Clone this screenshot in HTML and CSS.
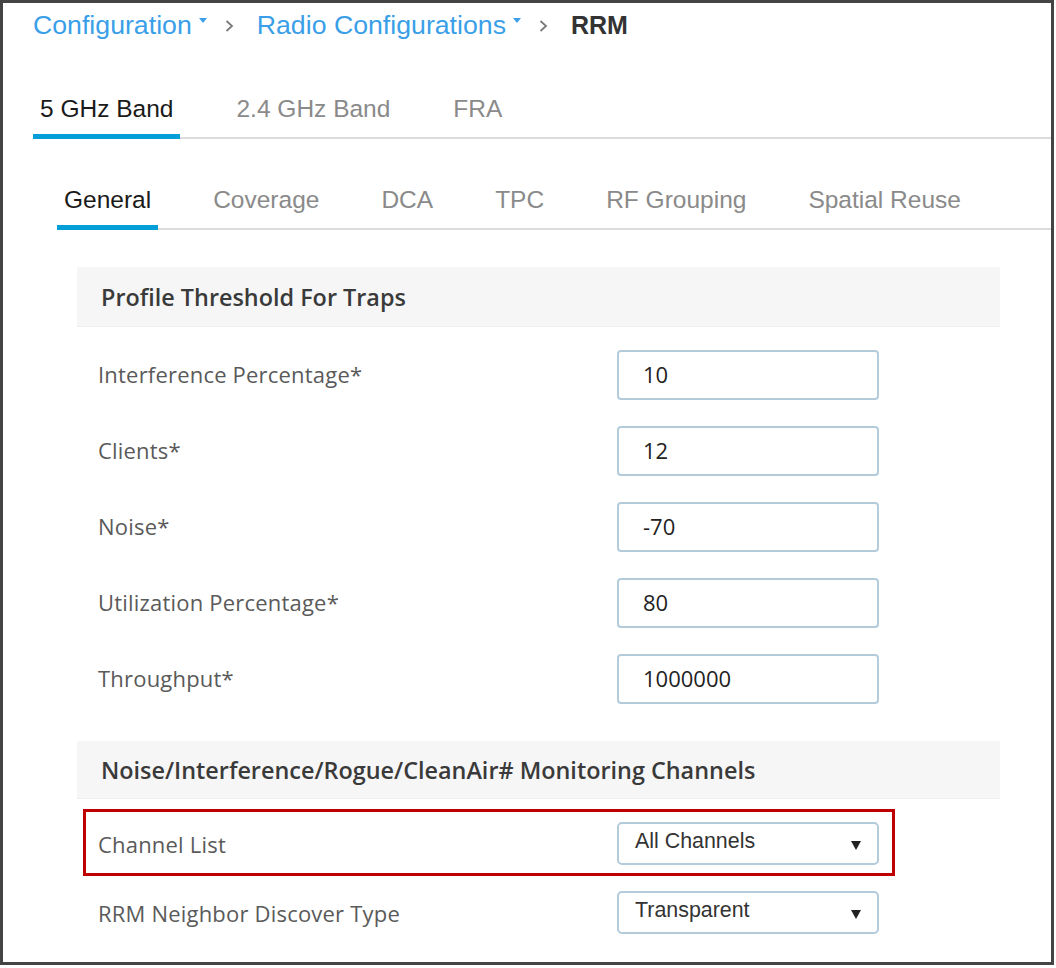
FILE: index.html
```html
<!DOCTYPE html>
<html lang="en">
<head>
<meta charset="utf-8">
<title>RRM - Radio Configurations</title>
<link rel="stylesheet" href="styles.css">
</head>
<body>
<div class="frame">
  <nav class="crumbs">
    <a class="crumb-link">Configuration</a>
    <svg class="caret" width="8" height="5" viewBox="0 0 8 5"><path d="M0 0H8L4 5Z" fill="#3a9fe8"/></svg>
    <svg class="chev" width="9" height="12" viewBox="0 0 9 12"><path d="M1.5 1L7 6L1.5 11" fill="none" stroke="#7a7a7a" stroke-width="1.8"/></svg>
    <a class="crumb-link">Radio Configurations</a>
    <svg class="caret" width="8" height="5" viewBox="0 0 8 5"><path d="M0 0H8L4 5Z" fill="#3a9fe8"/></svg>
    <svg class="chev" width="9" height="12" viewBox="0 0 9 12"><path d="M1.5 1L7 6L1.5 11" fill="none" stroke="#7a7a7a" stroke-width="1.8"/></svg>
    <span class="crumb-current">RRM</span>
  </nav>

  <div class="tabs band-tabs">
    <span class="tab active">5 GHz Band</span>
    <span class="tab">2.4 GHz Band</span>
    <span class="tab">FRA</span>
  </div>

  <div class="tabs sub-tabs">
    <span class="tab active">General</span>
    <span class="tab">Coverage</span>
    <span class="tab">DCA</span>
    <span class="tab">TPC</span>
    <span class="tab">RF Grouping</span>
    <span class="tab">Spatial Reuse</span>
  </div>

  <div class="panel">
    <h2 class="sec-head">Profile Threshold For Traps</h2>
    <div class="fields">
      <div class="row"><label class="lbl">Interference Percentage*</label><div class="input">10</div></div>
      <div class="row"><label class="lbl">Clients*</label><div class="input">12</div></div>
      <div class="row"><label class="lbl">Noise*</label><div class="input">-70</div></div>
      <div class="row"><label class="lbl">Utilization Percentage*</label><div class="input">80</div></div>
      <div class="row"><label class="lbl">Throughput*</label><div class="input">1000000</div></div>
    </div>

    <h2 class="sec-head sec-head-2">Noise/Interference/Rogue/CleanAir# Monitoring Channels</h2>
    <div class="sel-row highlight">
      <label class="lbl">Channel List</label>
      <div class="select"><span>All Channels</span><svg width="10" height="9" viewBox="0 0 10 9"><path d="M0 0H10L5 9Z" fill="#222"/></svg></div>
    </div>
    <div class="sel-row plain">
      <label class="lbl">RRM Neighbor Discover Type</label>
      <div class="select"><span>Transparent</span><svg width="10" height="9" viewBox="0 0 10 9"><path d="M0 0H10L5 9Z" fill="#222"/></svg></div>
    </div>
  </div>
</div>
</body>
</html>
```

FILE: styles.css
```css
* { box-sizing: border-box; }
html, body { margin: 0; padding: 0; background: #fff; }
body { font-family: "Liberation Sans", Arial, sans-serif; }

.frame {
  width: 1054px;
  height: 965px;
  border: 3px solid #444;
  overflow: hidden;
  background: #fff;
}

/* breadcrumb */
.crumbs {
  height: 44px;
  display: flex;
  align-items: center;
  padding-left: 30px;
  font-size: 26.7px;
  line-height: 44px;
}
.crumb-link { color: #3a9fe8; text-decoration: none; }
.caret { margin: 0 0 10px 7px; }
.chev { margin: 2px 23px 0 18px; }
.crumb-current { color: #333; font-weight: bold; font-size: 25px; }

/* tabs */
.tabs {
  display: flex;
  gap: 49px;
  border-bottom: 2px solid #dcdcdc;
}
.tab {
  padding: 0 7px 10px;
  line-height: 30px;
  color: #8a8a8a;
  border-bottom: 5px solid transparent;
  margin-bottom: -2px;
  white-space: nowrap;
}
.tab.active {
  color: #1a1a1a;
  border-bottom-color: #049fd9;
}
.band-tabs {
  margin: 47px 0 0 30px;
  font-size: 24.5px;
}
.sub-tabs {
  margin: 46px 0 0 54px;
  font-size: 24.5px;
  gap: 48px;
}

/* panel */
.panel { margin-left: 74px; width: 923px; }
.sec-head {
  margin: 37px 0 0;
  height: 60px;
  line-height: 60px;
  padding-left: 24px;
  background: #f6f6f6;
  border-bottom: 1px solid #efefef;
  font-family: "Open Sans", "Liberation Sans", sans-serif;
  font-size: 23.4px;
  font-weight: 600;
  color: #3a3a3a;
}
.sec-head-2 { height: 58px; line-height: 58px; }

.fields {
  display: flex;
  flex-direction: column;
  gap: 26px;
  margin-top: 23px;
}
.row {
  display: grid;
  grid-template-columns: 540px 262px;
  align-items: center;
}
.lbl {
  font-family: "Open Sans", "Liberation Sans", sans-serif;
  font-size: 22px;
  letter-spacing: 0.2px;
  color: #5a5a5a;
}
.row .lbl { padding-left: 21px; margin-top: -3px; }
.input {
  height: 50px;
  border: 2px solid #b3cbdb;
  border-radius: 4px;
  padding-left: 24px;
  line-height: 44px;
  font-family: "Open Sans", "Liberation Sans", sans-serif;
  font-size: 22px;
  color: #222;
}

.sel-row {
  display: grid;
  grid-template-columns: 531px 262px;
  align-items: center;
}
.sel-row .lbl { padding-left: 12px; }
.highlight {
  margin: 10px 0 0 6px;
  width: 812px;
  border: 3px solid #c00000;
  padding: 10px 0 8px;
}
.plain {
  margin: 15px 0 0 6px;
  padding: 0 0 0 3px;
}
.select {
  height: 43px;
  border: 2px solid #b3cbdb;
  border-radius: 5px;
  display: flex;
  align-items: center;
  justify-content: space-between;
  padding: 0 16px 0 16px;
  font-size: 21.4px;
  color: #333;
}
.select span { margin-top: -4px; }
.select svg { margin-top: 4px; }
```
